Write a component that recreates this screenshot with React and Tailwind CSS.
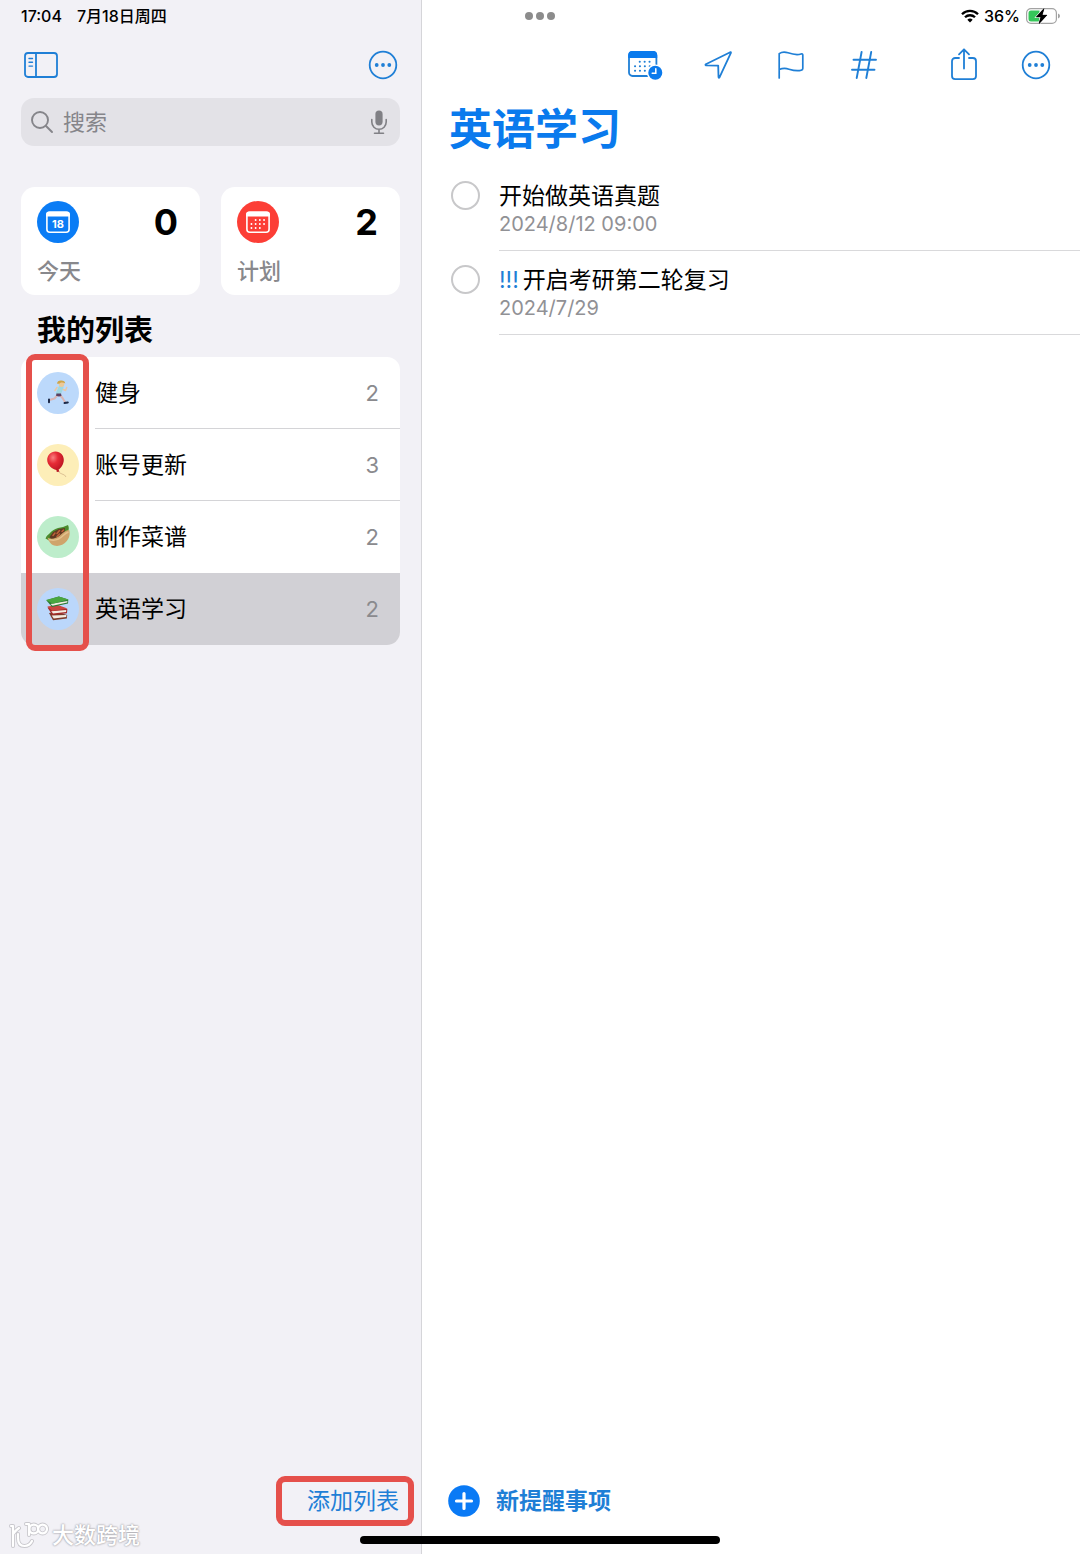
const BLUE = "#0a7aed";

function SidebarIcon() {
  return (
    <svg width="36" height="30" viewBox="0 0 36 30" fill="none" stroke="#1f7fd6" strokeWidth="1.8" strokeLinecap="round">
      <rect x="2" y="3" width="32" height="24" rx="3" />
      <path d="M13 3v24" />
      <path d="M6 8.500h3.500M6 12.300h3.500M6 16.100h3.500" strokeWidth="1.4" />
    </svg>
  );
}

function MoreIcon() {
  return (
    <svg width="30" height="30" viewBox="0 0 30 30" fill="none">
      <circle cx="15" cy="15" r="13.3" stroke="#1f7fd6" strokeWidth="1.8" />
      <g fill="#1f7fd6">
        <circle cx="8.7" cy="15" r="1.9" />
        <circle cx="15" cy="15" r="1.9" />
        <circle cx="21.3" cy="15" r="1.9" />
      </g>
    </svg>
  );
}

function SearchIcon() {
  return (
    <svg width="24" height="24" viewBox="0 0 24 24" fill="none" stroke="#85858a" strokeWidth="1.9" strokeLinecap="round">
      <circle cx="10" cy="10" r="8" />
      <path d="M16 16l6 6" />
    </svg>
  );
}

function MicIcon() {
  return (
    <svg width="18" height="26" viewBox="0 0 18 26" fill="none" stroke="#808085" strokeWidth="1.6" strokeLinecap="round">
      <rect x="5.4" y="1.4" width="7.2" height="15" rx="3.6" fill="#808085" stroke="none" />
      <path d="M1.8 10.5v2.6a7.2 7.2 0 0 0 14.4 0v-2.6M9 20.5v3.6M4.5 24.2h9" />
    </svg>
  );
}

function TodayIcon() {
  return (
    <svg width="42" height="42" viewBox="0 0 42 42" className="shrink-0">
      <circle cx="21" cy="21" r="21" fill="#0a7cf5" />
      <rect x="9.900" y="11.200" width="22.200" height="20" rx="3" fill="none" stroke="#fff" strokeWidth="1.600" />
      <path d="M9 15.500v-2a3 3 0 0 1 3-3h18a3 3 0 0 1 3 3v2z" fill="#fff" />
      <text x="21" y="27" fontSize="11" fontWeight="700" textAnchor="middle" fill="#fff">18</text>
    </svg>
  );
}

function ScheduledIcon() {
  return (
    <svg width="42" height="42" viewBox="0 0 42 42" className="shrink-0">
      <circle cx="21" cy="21" r="21" fill="#fc3e36" />
      <rect x="9.900" y="11.200" width="22.200" height="20" rx="3" fill="none" stroke="#fff" strokeWidth="1.600" />
      <path d="M9 15.500v-2a3 3 0 0 1 3-3h18a3 3 0 0 1 3 3v2z" fill="#fff" />
      <path d="M18.600 19h10M14.400 23h14.500M14.400 27h9" stroke="#fff" strokeWidth="1.800" strokeLinecap="round" strokeDasharray="0.1 4.1" />
    </svg>
  );
}

function CalendarClockIcon() {
  return (
    <svg width="36" height="32" viewBox="0 0 36 32" fill="none">
      <rect x="2" y="3" width="27.4" height="24" rx="3.5" stroke="#1f7fd6" strokeWidth="1.8" />
      <path d="M1.2 9V6a4 4 0 0 1 4-4h21a4 4 0 0 1 4 4v3z" fill={BLUE} />
      <path d="M12.7 12.7h11M8 17.2h16M8 21.7h11.5" stroke="#1f7fd6" strokeWidth="2" strokeLinecap="round" strokeDasharray="0.1 4.8" />
      <circle cx="28.3" cy="23.8" r="8.4" fill="#fff" />
      <circle cx="28.3" cy="23.8" r="7" fill={BLUE} />
      <path d="M28.8 19.8v4.4h-3.6" stroke="#fff" strokeWidth="1.5" strokeLinecap="round" />
    </svg>
  );
}

function LocationIcon() {
  return (
    <svg width="30" height="30" viewBox="0 0 30 30" fill="none" stroke="#1f7fd6" strokeWidth="1.8" strokeLinejoin="round">
      <path d="M2.800 14.200 27.200 2.200q1-.3.700.7L16.600 27.200q-.8 1.200-1.100-.2L15.200 15.600 3 15.300q-1-.4-.2-1.100z" />
    </svg>
  );
}

function FlagIcon() {
  return (
    <svg width="28" height="30" viewBox="0 0 28 30" fill="none" stroke="#1f7fd6" strokeWidth="1.7" strokeLinecap="round" strokeLinejoin="round">
      <path d="M2.2 28V3.6C4.5 2 8 1.8 11 2.8c5 1.7 9.500 2.300 13 1.200q1.800-.4 1.800 1v13.400c0 1-.6 1.500-1.600 1.800-4 1.200-8 .3-12.200-1-3-1-6.500-1-9.800.3" />
    </svg>
  );
}

function HashIcon() {
  return (
    <svg width="28" height="30" viewBox="0 0 28 30" fill="none" stroke="#1f7fd6" strokeWidth="1.9" strokeLinecap="round">
      <path d="M11.600 2 6.700 28M21.200 2 16.300 28M3.500 9.800h22.500M2 19.800h22.500" />
    </svg>
  );
}

function ShareIcon() {
  return (
    <svg width="28" height="34" viewBox="0 0 28 34" fill="none" stroke="#1f7fd6" strokeWidth="1.8" strokeLinecap="round" strokeLinejoin="round">
      <path d="M9 10H5.200A3.200 3.200 0 0 0 2 13.200v14.800A3.200 3.200 0 0 0 5.200 31.200h17.600A3.200 3.200 0 0 0 26 28V13.200A3.200 3.200 0 0 0 22.800 10H19M14 20.500V1.500M9 6.300 14 1.300l5 5" />
    </svg>
  );
}

function WifiIcon() {
  return (
    <svg width="18" height="14" viewBox="0 0 18 14" fill="none" stroke="#000" strokeWidth="2.300">
      <path d="M1 5.200a11.300 11.300 0 0 1 16 0M4 8.300a7.100 7.100 0 0 1 10 0" />
      <path d="M9 13.500 6.300 10.700a3.900 3.900 0 0 1 5.400 0z" fill="#000" stroke="none" />
    </svg>
  );
}

function BatteryIcon() {
  return (
    <svg width="36" height="18" viewBox="0 0 36 18" fill="none">
      <rect x="1.600" y="1.600" width="29.800" height="14.800" rx="4.400" stroke="#a3a3a3" strokeWidth="1.200" />
      <path d="M6 3.500h8.500v11H6a2.500 2.500 0 0 1-2.500-2.500V6A2.500 2.500 0 0 1 6 3.500z" fill="#35c759" />
      <path d="M33 6.500q2 .8 2 2.500t-2 2.500z" fill="#a3a3a3" />
      <path d="M19.200 1.200 11.200 10h4.600l-2 7L22 8.100h-4.800z" fill="#000" stroke="#fff" strokeWidth="1.600" paintOrder="stroke" />
      <path d="M19.200 1.200 11.200 10h4.600l-2 7L22 8.100h-4.800z" fill="#000" stroke="#000" strokeWidth="0.400" />
    </svg>
  );
}

function RunnerIcon() {
  return (
    <svg width="42" height="42" viewBox="0 0 42 42" fill="none" strokeLinecap="round" strokeLinejoin="round">
      <circle cx="21" cy="21" r="21" fill="#bcd9fb" />
      <path d="M21 22.500 17.500 26.500 12.500 28M22.500 22.500 25.500 26 28 30" stroke="#d9b5b4" strokeWidth="2" />
      <path d="m24 15.500-2.500 6" stroke="#9fd8e2" strokeWidth="5" />
      <path d="M20 15.500 18 18.500M26.500 17.500l2 1 1.200-3" stroke="#e8c9a8" strokeWidth="1.600" />
      <path d="M19.500 21.500h4.500l.5 2.500-2.700.6-2.800-.8z" fill="#5c3f60" />
      <circle cx="24.500" cy="12" r="2.900" fill="#ecc998" />
      <path d="M20 11.500q.5-3.300 4.300-3 3.700.2 4 3-2-1.500-4.300-1-2 1.800-4 1z" fill="#cfa548" />
      <path d="M12 27.500v2.800M27.500 31l3.300-.6" stroke="#1d2a49" strokeWidth="2" />
    </svg>
  );
}

function BalloonIcon() {
  return (
    <svg width="42" height="42" viewBox="0 0 42 42">
      <defs>
        <radialGradient id="balloon" cx="0.350" cy="0.300" r="0.750">
          <stop offset="0" stopColor="#f98080" />
          <stop offset="0.400" stopColor="#e62c36" />
          <stop offset="1" stopColor="#b5111f" />
        </radialGradient>
      </defs>
      <circle cx="21" cy="21" r="21" fill="#fdeeb8" />
      <path d="M21 26q1 3.500 4 4t4 3" fill="none" stroke="#d9bd90" strokeWidth="0.900" />
      <path d="M18.500 7.500c5 0 8.400 3.700 8.300 8.600-.1 4.300-2.600 8-5.300 9.600l1 1.800-2.700.4-.4-1.900c-4.500-1-9.200-4.800-9.200-9.900 0-4.900 3.500-8.600 8.300-8.600z" fill="url(#balloon)" />
    </svg>
  );
}

function FlatbreadIcon() {
  return (
    <svg width="42" height="42" viewBox="0 0 42 42">
      <circle cx="21" cy="21" r="21" fill="#bdedcb" />
      <path d="M8.500 22.500q1-3 4-5 3-4 8.500-5.500 5-.5 10-3 2 4-1 8l-8 7-8 1.500z" fill="#4b8a2c" />
      <path d="m12.500 21 3.500-5 6-3 6-1-.5 4.500-6 5-7 2z" fill="#5f3822" />
      <path d="m16 19.500 2-2.500M20 17.500l2.500-3M20 20.500l2.500-2.500M25 15.500l1.500-1.500" stroke="#bf6238" strokeWidth="1.500" strokeLinecap="round" />
      <path d="M10.500 21.500c3.500 2.200 8.500 1.100 12-1.700 3.200-2.600 6-5.600 9.700-5.800 1.300 4.500-.1 8.500-2.800 11.500-2.800 3.600-8 5.200-12.300 4-3.200-.9-5.600-4.400-6.600-8z" fill="#cfa46b" />
      <path d="M12 23.500c5 1.800 10.500-.2 14.500-4.200q2.500-2.500 5-3.300" fill="none" stroke="#e3c18c" strokeWidth="1.400" />
    </svg>
  );
}

function BooksIcon() {
  return (
    <svg width="42" height="42" viewBox="0 0 42 42" strokeLinejoin="round">
      <circle cx="21" cy="21" r="21" fill="#bbd7fb" />
      <path d="m12 25 4 7.200 13.800-1.700.4-3.500-10-3z" fill="#7c3b2b" />
      <path d="m14.700 27.500 2 3 12.500-1.500.2-2z" fill="#f3ece2" />
      <path d="m10.500 19.500 4.800 7.500 14.700-1.700.3-4.300-10-3z" fill="#a52a28" />
      <path d="m14.200 23.300 1.800 2.200 13-1.500.3-2z" fill="#f3ece2" />
      <path d="m10.300 18.500 10.500-1.500 9.700 3.500-15 2.500z" fill="#cb4540" />
      <path d="m9.300 12.200 5.700 6.800 16-3.400.3-4-9.500-3z" fill="#2c7a34" />
      <path d="m13.500 16 2 1.800 14.700-3.200.3-1.700z" fill="#f3ece2" />
      <path d="m9 12 12.800-3.500 9.700 3-15.700 4.200z" fill="#4aa640" />
    </svg>
  );
}

function PlusCircleIcon() {
  return (
    <svg width="32" height="32" viewBox="0 0 32 32">
      <circle cx="16" cy="16" r="15.800" fill="#0a7af5" />
      <path d="M16 8.500v15M8.500 16h15" stroke="#fff" strokeWidth="3.200" strokeLinecap="round" />
    </svg>
  );
}

function WatermarkLogo() {
  const strokes =
    "M3 6h2v20M5 14q3-4 6-6M10 14v4q0 8 6.500 8 5 0 7.500-5M18 4h3v11M30.200 9a4.400 4.400 0 1 1-8.800 0a4.400 4.400 0 1 1 8.800 0M39 9a4.400 4.400 0 1 1-8.800 0a4.400 4.400 0 1 1 8.800 0";
  return (
    <svg width="41" height="30" viewBox="0 0 41 30" fill="none" strokeLinecap="round" strokeLinejoin="round">
      <path d={strokes} stroke="#c9c8cd" strokeWidth="4" />
      <path d={strokes} stroke="#fff" strokeWidth="2.200" />
    </svg>
  );
}

const lists = [
  { name: "健身", count: 2, Icon: RunnerIcon },
  { name: "账号更新", count: 3, Icon: BalloonIcon },
  { name: "制作菜谱", count: 2, Icon: FlatbreadIcon },
  { name: "英语学习", count: 2, Icon: BooksIcon, selected: true },
];

const reminders = [
  { id: "r1", title: "开始做英语真题", date: "2024/8/12 09:00" },
  { id: "r2", title: "开启考研第二轮复习", date: "2024/7/29", priority: "!!!" },
];

function SummaryCard({ Icon, label, count }) {
  return (
    <button className="flex h-[108px] flex-col rounded-[14px] bg-white pt-[14px] pr-[22px] pl-4 text-left">
      <span className="flex w-full items-center justify-between">
        <Icon />
        <span className="text-[36px] leading-[42px] font-bold text-black">{count}</span>
      </span>
      <span className="mt-[13px] text-[22px] leading-[30px] font-medium text-[#88888c]">{label}</span>
    </button>
  );
}

function IconButton({ label, children }) {
  return (
    <button aria-label={label} className="flex h-10 w-10 items-center justify-center">
      {children}
    </button>
  );
}

function Sidebar() {
  return (
    <aside className="flex w-[422px] shrink-0 flex-col border-r border-[#d5d5d9] bg-[#f2f1f6]">
      <div className="flex h-8 items-center gap-[15px] pl-[21px] text-[16px] font-medium">
        <span>17:04</span>
        <span>7月18日周四</span>
      </div>
      <div className="flex h-[66px] items-center justify-between pr-[18px] pl-[21px]">
        <IconButton label="边栏"><SidebarIcon /></IconButton>
        <IconButton label="更多"><MoreIcon /></IconButton>
      </div>
      <div className="flex flex-col px-[21px]">
        <label className="flex h-12 items-center rounded-[13px] bg-[#e3e2e7] pr-3 pl-[9px]">
          <SearchIcon />
          <input
            type="text"
            placeholder="搜索"
            aria-label="搜索"
            className="ml-[9px] min-w-0 flex-1 bg-transparent text-[22px] leading-[30px] outline-none placeholder:text-[#85858a]"
          />
          <MicIcon />
        </label>
        <div className="mt-[41px] grid grid-cols-2 gap-[21px]">
          <SummaryCard Icon={TodayIcon} label="今天" count={0} />
          <SummaryCard Icon={ScheduledIcon} label="计划" count={2} />
        </div>
        <h2 className="pt-[19px] pb-[9px] pl-4 text-[29px] leading-[34px] font-bold">我的列表</h2>
        <div className="relative">
          <ul className="overflow-hidden rounded-[13px] bg-white">
            {lists.map(({ name, count, Icon, selected }, i) => (
              <li key={name} className={selected ? "bg-[#d1d0d5]" : ""}>
                <button className="flex h-[72px] w-full items-center pl-4 text-left">
                  <Icon />
                  <span
                    className={
                      "ml-4 flex h-full flex-1 items-center justify-between pr-[21px] text-[23px] " +
                      (i < 2 ? "border-b border-[#d4d4d7] pt-px" : "")
                    }
                  >
                    {name}
                    <span className="text-[22px] text-[#8a8a8e]">{count}</span>
                  </span>
                </button>
              </li>
            ))}
          </ul>
          <div className="pointer-events-none absolute -top-[3px] -bottom-[6px] left-[5px] w-[63px] rounded-[9px] border-[6px] border-[#e5504b]" />
        </div>
      </div>
      <div className="mt-auto flex justify-end pr-[7px] pb-7">
        <button className="h-[50px] w-[138px] rounded-[9px] border-[6px] border-[#e5504b] pr-[9px] text-right text-[23px] leading-[38px] text-[#1f7fd6]">
          添加列表
        </button>
      </div>
    </aside>
  );
}

function Reminder({ id, title, date, priority }) {
  return (
    <li className="flex gap-[19px] pl-[29px]">
      <input
        id={id}
        type="checkbox"
        className="mt-[14px] h-[29px] w-[29px] shrink-0 appearance-none rounded-full border-2 border-[#c8c8ca] checked:bg-[#0a7aed]"
      />
      <label htmlFor={id} className="flex flex-1 flex-col border-b border-[#d9d9db] pt-[14px] pb-[13px]">
        <span className="text-[23px] leading-[30px]">
          {priority && <span className="mr-1 text-[#1f7fd6]">{priority}</span>}
          {title}
        </span>
        <span className="text-[20px] leading-[26px] text-[#919195]">{date}</span>
      </label>
    </li>
  );
}

function Detail() {
  return (
    <main className="flex min-w-0 flex-1 flex-col bg-white">
      <div className="flex h-8 items-center justify-end gap-[5px] pr-[19px] text-[16px] font-medium">
        <WifiIcon />
        <span>36%</span>
        <BatteryIcon />
      </div>
      <div className="flex h-[66px] items-center justify-end pr-6">
        <div className="mr-[60px] flex gap-[33px]">
          <IconButton label="日期"><CalendarClockIcon /></IconButton>
          <IconButton label="位置"><LocationIcon /></IconButton>
          <IconButton label="旗标"><FlagIcon /></IconButton>
          <IconButton label="标签"><HashIcon /></IconButton>
        </div>
        <div className="flex gap-8">
          <IconButton label="共享"><ShareIcon /></IconButton>
          <IconButton label="更多"><MoreIcon /></IconButton>
        </div>
      </div>
      <h1 className="pt-px pb-2 pl-[27px] text-[43px] leading-[60px] font-bold text-[#0a7aed]">英语学习</h1>
      <ul>
        {reminders.map((r) => (
          <Reminder key={r.id} {...r} />
        ))}
      </ul>
      <div className="mt-auto pb-[37px] pl-[26px]">
        <button className="flex items-center gap-4 text-[23px] leading-[30px] font-bold text-[#1f7fd6]">
          <PlusCircleIcon />
          新提醒事项
        </button>
      </div>
    </main>
  );
}

export default function App() {
  return (
    <div className="relative flex min-h-screen font-[Inter,'Noto_Sans_CJK_SC',sans-serif] text-black">
      <Sidebar />
      <Detail />
      <div className="absolute top-3 left-1/2 flex -translate-x-1/2 gap-[3px]">
        <span className="h-2 w-2 rounded-full bg-[#8c8c8c]" />
        <span className="h-2 w-2 rounded-full bg-[#8c8c8c]" />
        <span className="h-2 w-2 rounded-full bg-[#8c8c8c]" />
      </div>
      <div className="absolute bottom-[10px] left-1/2 h-2 w-1/3 -translate-x-1/2 rounded-full bg-black" />
      <div className="absolute bottom-1 left-2 flex items-center gap-[3px]">
        <WatermarkLogo />
        <span className="text-[22px] leading-[30px] font-medium text-white [text-shadow:0_0_2px_#a5a4aa,0_0_2px_#a5a4aa]">大数跨境</span>
      </div>
    </div>
  );
}
